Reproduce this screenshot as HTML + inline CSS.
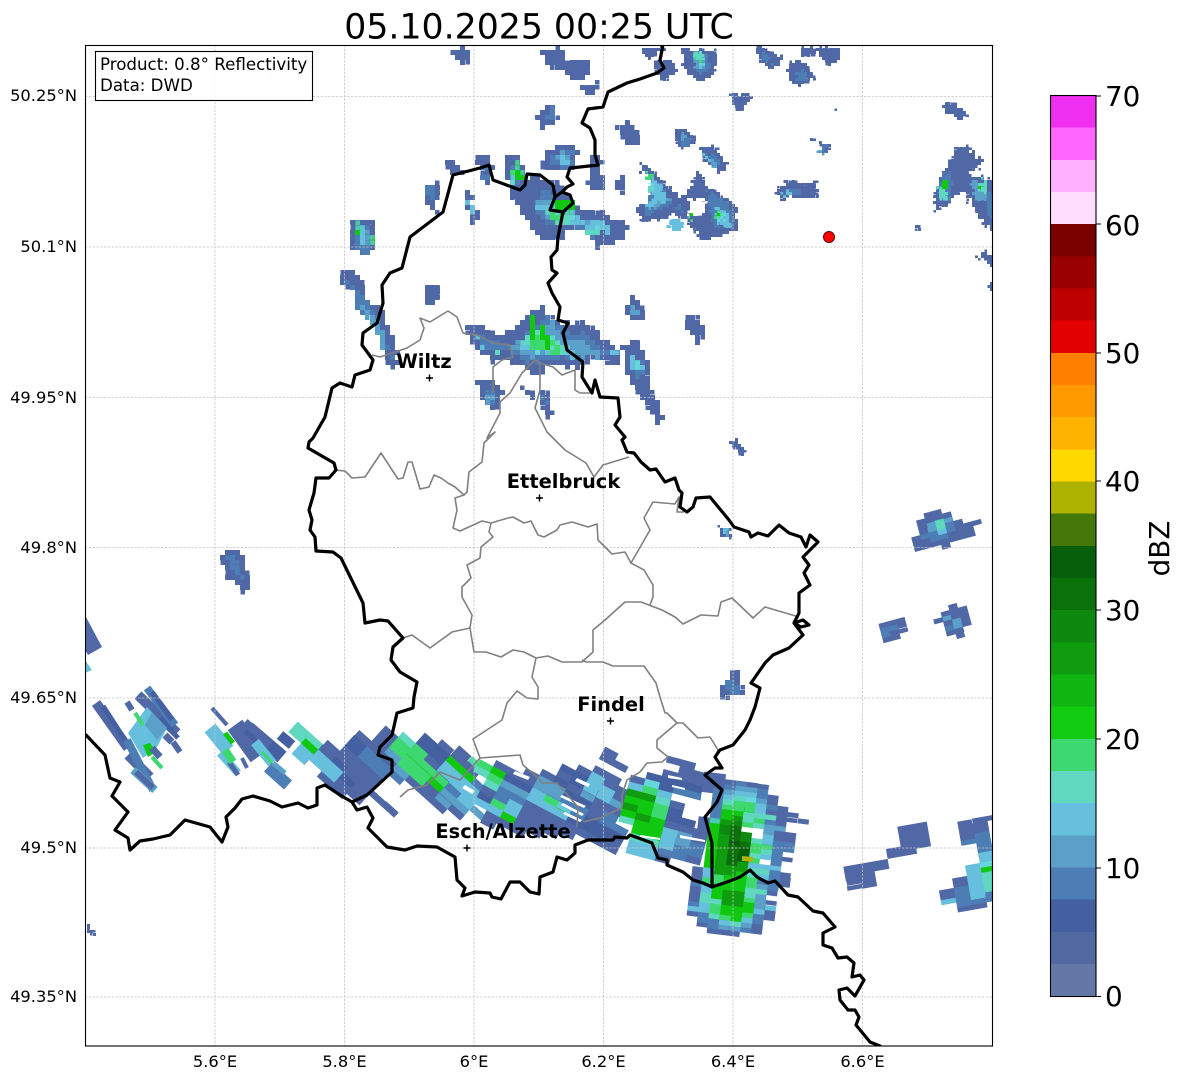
<!DOCTYPE html>
<html><head><meta charset="utf-8"><title>05.10.2025 00:25 UTC</title>
<style>html,body{margin:0;padding:0;background:#fff;width:1184px;height:1081px;overflow:hidden}svg{display:block;overflow:hidden}text{font-family:"DejaVu Sans","Liberation Sans",sans-serif;fill:#000}</style></head>
<body>
<svg xmlns="http://www.w3.org/2000/svg" width="1184" height="1081" viewBox="0 0 1184 1081">
<defs>
<clipPath id="m"><rect x="85" y="45" width="907.5" height="1001"/></clipPath>
<clipPath id="cA"><rect x="288" y="715" width="192" height="105"/></clipPath>
<clipPath id="cB"><rect x="480" y="740" width="145" height="110"/></clipPath>
<clipPath id="cC"><rect x="625" y="745" width="75" height="125"/></clipPath>
<clipPath id="cS"><path d="M700 765H815V945H680V868H700z"/></clipPath>
<clipPath id="cE"><rect x="835" y="810" width="157.500" height="105"/></clipPath>
<clipPath id="cR"><rect x="870" y="500" width="110" height="145"/></clipPath>
<filter id="p5" filterUnits="userSpaceOnUse" primitiveUnits="userSpaceOnUse" x="0" y="0" width="1184" height="1081" color-interpolation-filters="sRGB"><feTurbulence baseFrequency=".16" numOctaves="2" seed="7" result="n"/><feDisplacementMap in="SourceGraphic" in2="n" scale="9" xChannelSelector="R" yChannelSelector="G" result="d"/><feFlood x="2" y="2" width="1" height="1"/><feComposite width="5" height="5"/><feTile result="a"/><feComposite in="d" in2="a" operator="in"/><feMorphology operator="dilate" radius="2"/></filter>
<filter id="p3" filterUnits="userSpaceOnUse" primitiveUnits="userSpaceOnUse" x="0" y="0" width="1184" height="1081" color-interpolation-filters="sRGB"><feTurbulence baseFrequency=".2" numOctaves="2" seed="11" result="n"/><feDisplacementMap in="SourceGraphic" in2="n" scale="8" xChannelSelector="R" yChannelSelector="G" result="d"/><feFlood x="1" y="1" width="1" height="1"/><feComposite width="3" height="3"/><feTile result="a"/><feComposite in="d" in2="a" operator="in"/><feMorphology operator="dilate" radius="1"/></filter>
<filter id="fA" filterUnits="userSpaceOnUse" primitiveUnits="userSpaceOnUse" x="670" y="190" width="260" height="250" color-interpolation-filters="sRGB"><feTurbulence baseFrequency=".09" numOctaves="2" seed="5" result="n"/><feDisplacementMap in="SourceGraphic" in2="n" scale="8" xChannelSelector="R" yChannelSelector="G" result="d"/><feFlood x="678" y="193" width="1" height="1"/><feComposite x="670" y="190" width="17" height="7"/><feTile result="a"/><feComposite in="d" in2="a" operator="in"/><feMorphology operator="dilate" radius="8 3"/></filter>
<filter id="fB" filterUnits="userSpaceOnUse" primitiveUnits="userSpaceOnUse" x="750" y="340" width="220" height="200" color-interpolation-filters="sRGB"><feTurbulence baseFrequency=".1" numOctaves="2" seed="6" result="n"/><feDisplacementMap in="SourceGraphic" in2="n" scale="8" xChannelSelector="R" yChannelSelector="G" result="d"/><feFlood x="757" y="343" width="1" height="1"/><feComposite x="750" y="340" width="15" height="7"/><feTile result="a"/><feComposite in="d" in2="a" operator="in"/><feMorphology operator="dilate" radius="7 3"/></filter>
<filter id="fC" filterUnits="userSpaceOnUse" primitiveUnits="userSpaceOnUse" x="780" y="515" width="160" height="185" color-interpolation-filters="sRGB"><feTurbulence baseFrequency=".1" numOctaves="2" seed="8" result="n"/><feDisplacementMap in="SourceGraphic" in2="n" scale="6" xChannelSelector="R" yChannelSelector="G" result="d"/><feFlood x="787" y="518" width="1" height="1"/><feComposite x="780" y="515" width="15" height="7"/><feTile result="a"/><feComposite in="d" in2="a" operator="in"/><feMorphology operator="dilate" radius="7 3"/></filter>
<filter id="fS" filterUnits="userSpaceOnUse" primitiveUnits="userSpaceOnUse" x="760" y="645" width="175" height="220" color-interpolation-filters="sRGB"><feTurbulence baseFrequency=".1" numOctaves="2" seed="9" result="n"/><feDisplacementMap in="SourceGraphic" in2="n" scale="6" xChannelSelector="R" yChannelSelector="G" result="d"/><feFlood x="765" y="647" width="1" height="1"/><feComposite x="760" y="645" width="11" height="5"/><feTile result="a"/><feComposite in="d" in2="a" operator="in"/><feMorphology operator="dilate" radius="5 2"/></filter>
<filter id="fE" filterUnits="userSpaceOnUse" primitiveUnits="userSpaceOnUse" x="650" y="930" width="200" height="160" color-interpolation-filters="sRGB"><feTurbulence baseFrequency=".1" numOctaves="2" seed="3" result="n"/><feDisplacementMap in="SourceGraphic" in2="n" scale="7" xChannelSelector="R" yChannelSelector="G" result="d"/><feFlood x="657" y="932" width="1" height="1"/><feComposite x="650" y="930" width="15" height="5"/><feTile result="a"/><feComposite in="d" in2="a" operator="in"/><feMorphology operator="dilate" radius="7 2"/></filter>
<filter id="fR" filterUnits="userSpaceOnUse" primitiveUnits="userSpaceOnUse" x="660" y="700" width="170" height="185" color-interpolation-filters="sRGB"><feTurbulence baseFrequency=".15" numOctaves="2" seed="2" result="n"/><feDisplacementMap in="SourceGraphic" in2="n" scale="7" xChannelSelector="R" yChannelSelector="G" result="d"/><feFlood x="664" y="702" width="1" height="1"/><feComposite x="660" y="700" width="9" height="5"/><feTile result="a"/><feComposite in="d" in2="a" operator="in"/><feMorphology operator="dilate" radius="4 2"/></filter>
</defs>
<rect width="1184" height="1081" fill="#fff"/>
<g clip-path="url(#m)">
<g filter="url(#p5)" shape-rendering="crispEdges">
<path fill="#5069a6" d="M448 48 473 46 470 55 458 63 449 56zM540 46 560 48 563 65 553 70 542 60zM565 60 585 58 584 75 572 80 565 75zM580 85 595 78 594 90 585 92zM533 112 548 103 557 115 545 125 537 126zM615 125 627 122 638 132 633 148 620 135zM540 150 560 143 575 145 575 165 550 170 540 165zM587 150 598 155 602 185 590 190 585 178zM613 178 623 175 620 190 613 188zM442 158 452 155 460 172 450 172 445 165zM473 152 485 152 490 165 484 185 478 165zM503 155 520 155 523 185 510 190 503 175zM505 187 530 175 555 180 575 205 600 212 625 222 625 238 612 237 600 248 590 240 575 222 555 237 540 235 520 215zM422 182 434 182 436 195 433 210 423 200zM460 187 466 188 478 220 478 227 468 218zM349 215 372 220 373 240 367 255 358 255 349 245zM338 282 340 266 346 266 358 272 365 300 378 305 386 320 392 340 398 365 385 365 383 350 376 320 360 305 352 290zM420 282 434 282 435 295 428 303 420 290zM624 300 632 292 640 305 641 318 630 320 623 310zM463 323 478 322 495 335 520 325 525 310 540 305 555 318 570 325 582 318 595 330 615 350 620 365 608 362 590 355 575 365 555 362 550 360 535 375 525 365 500 358 490 360 475 345 465 335zM621 345 632 337 645 350 645 375 655 400 662 420 655 423 640 395 622 370zM475 380 490 378 500 390 498 405 490 408 476 395zM538 385 546 387 549 412 543 415 538 403zM522 387 528 385 530 398 524 396zM680 318 695 310 703 328 697 342 685 330zM729 668 737 668 742 695 716 693 717 685 728 682zM217 555 230 546 240 552 248 590 240 590 225 572z"/>
<path fill="#4c7db5" d="M352 220 366 224 368 248 358 250 352 240zM424 185 432 186 432 198 426 198zM480 158 488 165 484 178 480 170zM545 155 570 150 570 165 548 165zM508 165 518 165 520 182 510 185zM545 185 550 195 575 215 600 222 590 235 570 218 550 225 530 205zM470 328 490 340 510 345 520 335 545 315 565 330 590 335 610 355 590 350 560 355 530 360 500 350 480 345zM628 348 640 360 640 380 630 370zM482 385 494 392 492 402 482 394zM541 392 545 405 541 405zM345 280 355 290 372 310 380 330 388 350 392 360 382 345 372 320 355 305zM552 115 548 106 540 118zM725 680 733 675 737 690 722 690zM225 555 232 552 240 580 232 572z"/>
<path fill="#5aa0c8" d="M358 222 364 226 365 245 358 245zM555 195 575 215 610 225 590 225 570 215 548 220 535 200zM505 345 525 335 550 320 560 335 585 340 600 355 560 352 530 355zM628 310 634 298 636 312zM352 290 360 300 378 325 385 350 380 345 365 315zM558 152 570 155 568 165 555 162zM485 390 490 395 488 402z"/>
<path fill="#66c0dd" d="M530 200 560 210 595 225 600 232 585 225 560 220zM515 347 535 335 570 345 575 355 545 352zM358 226 362 230 362 240 358 240zM630 350 640 365 636 372 628 360zM510 170 518 172 517 182 510 180zM475 335 482 345 478 350zM590 215 610 225 612 232 595 230zM465 195 472 208 468 212zM558 155 567 155 565 162 558 160zM605 342 615 352 610 355z"/>
<path fill="#60d8c0" d="M540 205 570 215 575 222 555 222zM520 342 540 325 560 345 565 350 535 350zM492 345 500 350 495 355zM582 225 602 228 598 235 585 232zM635 355 640 362 635 365z"/>
<path fill="#3dd86f" d="M530 335 545 330 560 350 530 350zM510 168 518 168 518 180 512 178zM548 208 560 212 555 222 548 218zM355 225 358 232 355 235zM642 355 645 362 642 362z"/>
<path fill="#11c811" d="M527 310 532 312 534 340 530 338zM537 325 545 325 550 345 540 345zM513 160 518 162 522 178 516 178zM552 195 572 198 575 210 552 210zM355 222 360 222 360 232 355 232zM369 233 373 233 373 243 369 243z"/>
</g>
<g filter="url(#p3)" shape-rendering="crispEdges">
<path fill="#5069a6" d="M640 46 665 46 650 56 642 55zM650 60 670 58 677 72 660 78zM680 47 715 47 713 72 700 80 682 68zM753 46 765 46 782 58 768 68 760 60zM787 62 800 57 812 75 800 85 787 78zM797 46 838 46 838 58 825 62 815 52 800 55zM728 92 745 92 750 97 742 107 733 107zM832 107 836 107 836 110 832 110zM942 102 955 102 967 113 958 118 943 110zM673 128 685 127 694 137 686 148 675 142zM698 145 712 145 725 162 718 172 702 158zM808 136 812 136 812 140 808 140zM817 140 832 142 826 150 822 151zM775 190 785 178 800 182 815 180 815 195 790 195 780 198zM640 160 652 170 660 180 680 195 690 185 697 168 705 185 720 192 735 205 736 228 722 232 700 240 690 225 680 215 670 212 655 218 640 220 635 205 650 200 655 185 640 175zM955 145 965 145 982 160 977 165 965 170 972 175 995 180 995 232 985 225 975 215 965 190 955 190 950 200 940 205 932 210 936 180 945 165zM978 250 985 250 995 262 995 270 985 262zM988 282 995 282 995 288 988 288zM914 225 917 225 917 228 914 228zM972 255 976 255 976 258 972 258zM728 440 735 438 743 450 740 456zM717 524 728 525 730 535 720 535zM85 922 95 932 90 935 85 928z"/>
<path fill="#fff" d="M687 197 703 197 703 212 687 212zM640 172 650 172 650 192 640 192z"/>
<path fill="#4c7db5" d="M690 55 705 52 708 68 695 72zM760 48 770 62 762 58zM795 68 803 68 805 80 795 78zM680 135 688 135 684 145 678 140zM704 152 712 152 720 165 712 165zM650 175 660 185 670 200 650 210 642 212zM675 200 682 205 678 212zM705 190 725 200 732 220 712 225zM785 188 798 186 800 192 785 193zM940 175 950 170 948 195 940 198zM985 190 995 190 995 220 985 215zM820 145 826 143 822 150z"/>
<path fill="#5aa0c8" d="M655 180 668 198 648 208 642 205 655 195zM692 58 704 58 704 66 695 68zM678 133 684 133 682 140zM708 156 716 160 716 168 708 162zM815 150 822 148 820 152zM720 526 728 528 726 534 722 532zM970 178 985 185 983 200 972 195z"/>
<path fill="#66c0dd" d="M650 178 660 185 665 198 648 205 642 208 650 198zM714 205 726 210 730 225 716 222zM778 192 790 190 787 195zM936 190 944 188 942 198zM695 60 702 60 700 68zM698 150 708 155 712 163 706 158zM672 215 682 220 678 232 668 225zM720 526 726 528 724 532z"/>
<path fill="#60d8c0" d="M690 50 700 50 705 60 698 62zM714 208 722 212 722 220 714 216zM646 180 652 186 648 192zM936 186 946 186 944 196 938 196zM975 180 986 180 984 190 976 188z"/>
<path fill="#3dd86f" d="M645 168 650 172 650 178 645 175zM692 55 700 58 698 62zM714 210 722 214 722 218 716 216z"/>
<path fill="#11c811" d="M940 180 945 180 945 192 941 190zM975 184 982 182 980 188zM716 210 720 212 720 216 716 214zM686 212 690 212 690 218 686 218z"/>
</g>
<path fill="#e9f0f7" d="M266 74 274 70 272 85 266 92 263 90z"/>
<path fill="#5069a6" d="M86 617 102 647 88 655 85 650z"/>
<path fill="#66c0dd" d="M85 660 92 670 85 673z"/>
<g fill="none" stroke-linecap="butt">
<path stroke="#5069a6" stroke-width="10" d="M96 703 128 748M138 695 177 733M128 755 150 777"/>
<path stroke="#4c7db5" stroke-width="8" d="M127 740 153 790M147 688 175 725"/>
<path stroke="#5069a6" stroke-width="6" d="M127 702 132 710M173 742 180 752"/>
<path stroke="#4560a0" stroke-width="5" d="M103 706 125 740M152 692 172 720M160 718 178 738"/>
<path stroke="#5aa0c8" stroke-width="8" d="M133 770 155 790"/>
<path stroke="#5069a6" stroke-width="6" d="M136 772 153 788"/>
</g>
<path fill="#66c0dd" d="M128 733 147 707 167 728 157 747 143 758z"/>
<path fill="#5aa0c8" d="M152 712 167 728 157 740 145 725z"/>
<path fill="#11c811" d="M143 745 150 743 156 752 148 757z"/>
<g fill="none" stroke-linecap="butt">
<path stroke="#3dd86f" stroke-width="4" d="M135 713 143 725M152 757 162 768"/>
<path stroke="#5069a6" stroke-width="7" d="M165 735 172 742M152 748 160 757"/>
<path stroke="#5069a6" stroke-width="4" d="M212 708 227 725M242 758 247 768"/>
<path stroke="#66c0dd" stroke-width="14" d="M210 728 228 750"/>
<path stroke="#66c0dd" stroke-width="8" d="M220 753 238 773"/>
<path stroke="#5069a6" stroke-width="5" d="M229 762 238 775"/>
<path stroke="#3dd86f" stroke-width="8" d="M225 750 233 762"/>
<path stroke="#11c811" stroke-width="5" d="M225 733 233 743"/>
<path stroke="#5069a6" stroke-width="18" d="M235 725 258 757"/>
<path stroke="#4560a0" stroke-width="14" d="M248 728 282 757"/>
<path stroke="#5069a6" stroke-width="8" d="M245 722 270 745"/>
<path stroke="#66c0dd" stroke-width="10" d="M255 742 272 763"/>
<path stroke="#3dd86f" stroke-width="3" d="M262 752 272 763"/>
<path stroke="#4c7db5" stroke-width="12" d="M268 767 288 785"/>
<path stroke="#5aa0c8" stroke-width="5" d="M273 763 285 773"/>
<path stroke="#4560a0" stroke-width="10" d="M280 735 292 745"/>
</g>
<g transform="rotate(42)"><g filter="url(#fA)"><g transform="rotate(-42)" clip-path="url(#cA)" shape-rendering="crispEdges">
<path fill="#5069a6" d="M292 722 320 745 345 745 375 730 395 730 420 735 470 755 485 760 485 818 470 815 440 810 410 785 395 770 372 800 355 802 325 780 300 755zM377 800 385 797 402 812 396 818z"/>
<g fill="none" stroke-linecap="butt">
<path stroke="#4560a0" stroke-width="12" d="M352 740 385 770M330 760 360 790M420 740 460 770M440 770 485 800M300 745 340 780"/>
<path stroke="#4c7db5" stroke-width="13" d="M360 750 395 775M415 760 455 795M470 770 485 779"/>
<path stroke="#5aa0c8" stroke-width="10" d="M385 745 410 770M440 790 480 810"/>
<path stroke="#66c0dd" stroke-width="14" d="M293 740 335 768M395 740 430 770M450 765 470 790M455 790 485 803"/>
<path stroke="#60d8c0" stroke-width="8" d="M295 727 322 750M400 735 430 760M475 770 485 778"/>
</g>
<path fill="#3dd86f" d="M395 745 410 738 442 770 440 785 425 785 400 762zM450 757 468 765 470 772 455 770zM475 760 485 757 485 778z"/>
<path fill="#11c811" d="M303 745 312 743 320 755 310 762z"/>
<path fill="none" stroke="#11c811" stroke-width="4" d="M405 750 440 785M455 760 470 772"/>
</g></g></g>
<g transform="rotate(28)"><g filter="url(#fB)"><g transform="rotate(-28)" clip-path="url(#cB)" shape-rendering="crispEdges">
<path fill="#5069a6" d="M475 757 520 770 560 765 600 768 630 775 630 850 610 848 575 835 520 835 475 817zM600 750 610 745 627 765 620 770 603 760zM615 743 623 747 621 751 614 748z"/>
<g fill="none" stroke-linecap="butt">
<path stroke="#4560a0" stroke-width="12" d="M475 793 500 810M500 775 560 800M550 780 590 800M570 815 620 835M560 765 600 785"/>
<path stroke="#4c7db5" stroke-width="13" d="M470 770 520 800M545 795 590 815M600 810 625 825"/>
<path stroke="#5aa0c8" stroke-width="10" d="M475 802 480 810M500 780 530 800M530 775 560 790M590 790 620 805"/>
<path stroke="#66c0dd" stroke-width="14" d="M475 800 490 805M490 798 520 815M525 790 565 810M590 780 610 795"/>
<path stroke="#60d8c0" stroke-width="8" d="M475 770 500 790M540 790 560 805"/>
</g>
<path fill="#3dd86f" d="M475 760 490 756 510 775 505 782 485 775zM490 803 500 798 518 815 510 822zM535 790 548 790 562 805 552 810z"/>
<path fill="none" stroke="#11c811" stroke-width="4" d="M485 765 505 775M500 808 515 818M550 800 565 808"/>
</g></g></g>
<g transform="rotate(15)"><g filter="url(#fC)"><g transform="rotate(-15)" clip-path="url(#cC)" shape-rendering="crispEdges">
<path fill="#5069a6" d="M620 775 660 772 705 770 705 866 690 862 640 858 620 850zM672 755 707 767 700 770 672 762zM675 768 705 771 705 790 678 782z"/>
<g fill="none" stroke-linecap="butt">
<path stroke="#4560a0" stroke-width="12" d="M650 780 700 790M660 810 700 820"/>
<path stroke="#4c7db5" stroke-width="13" d="M665 790 700 800M640 835 680 850M680 840 710 855"/>
<path stroke="#5aa0c8" stroke-width="10" d="M630 820 690 840"/>
<path stroke="#66c0dd" stroke-width="14" d="M640 780 660 845M620 840 650 850M690 815 705 815"/>
</g>
<path fill="#fff" d="M678 792 710 795 712 815 680 817z"/>
<path fill="#66c0dd" d="M640 782 655 778 668 790 670 820 668 845 655 856 628 848 622 820 622 795z"/>
<path fill="#60d8c0" d="M626 795 650 782 664 800 665 835 655 848 632 838 622 815z"/>
<path fill="#3dd86f" d="M626 797 648 785 660 805 660 830 652 842 632 832 625 815z"/>
<path fill="#11c811" d="M622 802 635 790 648 787 655 812 662 840 650 843 632 825 625 817z"/>
<path fill="#0f9d0f" d="M626 790 650 790 652 798 628 797zM627 805 642 808 645 820 630 818z"/>
</g></g></g>
<g transform="rotate(7)"><g filter="url(#fS)"><g transform="rotate(-7)" clip-path="url(#cS)" shape-rendering="crispEdges">
<path fill="#5069a6" d="M698 770 720 770 720 868 698 866zM715 790 730 780 750 780 770 790 780 805 790 818 785 850 780 860 785 878 775 885 768 905 760 925 745 933 720 935 700 925 688 910 695 880 695 860 705 840 712 810zM698 770 717 772 720 795 698 788zM790 818H803V821H790zM782 832H792V845H782zM781 853H785V857H781zM775 857H787V862H775zM770 880H785V885H770zM758 898H775V902H758zM750 905H772V918H750zM745 925H760V932H745zM690 878H700V884H690zM683 905H695V910H683z"/>
<path fill="#4c7db5" d="M712 790 740 782 760 788 776 808 780 845 776 880 768 895 760 920 745 930 712 930 700 920 692 905 698 870 705 840z"/>
<path fill="#5aa0c8" d="M722 792 750 785 765 800 772 840 770 870 760 895 755 920 735 928 712 925 697 905 700 870 705 845z"/>
<path fill="#66c0dd" d="M722 796 748 788 762 805 767 838 767 870 757 895 752 918 735 926 712 922 700 905 703 870 706 850z"/>
<path fill="#60d8c0" d="M722 800 748 792 758 808 763 840 762 868 752 892 748 915 735 922 714 918 704 902 707 870 710 850z"/>
<path fill="#3dd86f" d="M720 804 750 800 756 850 752 885 752 905 742 921 714 918 706 895 708 870 702 855 708 835z"/>
<path fill="#11c811" d="M716 810 748 807 752 860 746 888 750 904 742 920 719 915 710 895 712 870 701 855 710 830z"/>
<path fill="#0f9d0f" d="M718 818 745 815 750 852 742 872 716 878 712 850zM715 888 745 886 748 902 722 906z"/>
<path fill="#0f880f" d="M722 822 745 820 747 856 725 866z"/>
<path fill="#0b720b" d="M730 826 742 826 746 860 730 866 722 850 726 838z"/>
<path fill="#065f0a" d="M733 838 742 838 746 858 730 862z"/>
<path fill="#3dd86f" d="M745 842H768V848H745zM745 818H765V824H745zM700 876H725V880H700z"/>
<path fill="#60d8c0" d="M745 812H770V818H745zM750 850H772V855H750zM748 868H770V874H748zM700 896H718V902H700zM745 890H765V896H745z"/>
<path fill="#66c0dd" d="M700 870H716V876H700zM690 905H712V911H690zM748 905H772V912H748zM745 862H775V867H745z"/>
<path fill="#5aa0c8" d="M762 822H790V828H762z"/>
<path fill="#4c7db5" d="M770 842H790V850H770zM755 878H780V885H755zM693 915H712V921H693z"/>
<path fill="#5069a6" d="M770 810H795V817H770zM775 830H800V838H775z"/>
<path fill="#11c811" d="M712 880H745V886H712zM718 905H742V915H718z"/>
<path fill="#0f9d0f" d="M720 892H745V898H720z"/>
<path fill="#fff" d="M700 793H710V815H700zM745 827 768 828 768 835 745 835zM762 858H772V860H762z"/>
</g></g></g>
<g transform="rotate(-10)"><g filter="url(#fE)"><g transform="rotate(10)" clip-path="url(#cE)" shape-rendering="crispEdges">
<path fill="#5069a6" d="M840 865 875 862 880 855 893 850 900 822 920 822 923 845 915 855 893 858 873 875 870 885 852 885 850 875 840 873z"/>
<path fill="#5069a6" d="M955 822 992 815 995 908 970 910 935 905 932 893 958 880 972 862 968 845 957 835z"/>
<path fill="#4c7db5" d="M965 838 985 830 995 835 995 900 970 905 945 900 962 885 976 858z"/>
<path fill="#66c0dd" d="M975 855 990 848 995 885 970 897 960 890zM945 895 955 892 955 905 945 905z"/>
<path fill="#60d8c0" d="M985 860 995 855 995 890 980 893z"/>
<path fill="#11c811" d="M985 862 990 858 995 860 995 875 988 872z"/>
</g></g></g>
<g transform="rotate(-15)"><g filter="url(#fR)"><g transform="rotate(15)" clip-path="url(#cR)" shape-rendering="crispEdges">
<path fill="#5069a6" d="M915 525 925 510 945 510 950 520 975 520 970 535 945 545 915 550 910 540zM877 622 903 618 903 630 890 640 880 638zM945 605 960 603 970 620 960 635 945 635 935 622z"/>
<path fill="#4c7db5" d="M920 530 940 520 960 528 930 542zM950 615 962 615 958 628 945 626zM880 628 895 625 892 635 882 635z"/>
<path fill="#5aa0c8" d="M930 522 945 518 945 530 930 530zM945 618 958 616 955 625z"/>
<path fill="#66c0dd" d="M933 526 942 522 942 530 935 532zM950 620 958 620 954 626z"/>
<path fill="#60d8c0" d="M934 520 940 520 938 528z"/>
</g></g></g>
<path fill="#adb300" d="M742 856 753 857 753 862 742 861z"/>
<path fill="#fff" d="M562 795 586 806 584 808 560 797zM563 803 584 814 582 816 561 805zM565 812 582 820 580 822 563 814zM515 771 530 777 528 780 513 774zM465 785 475 791 472 794 462 788zM577 778 590 784 588 787 575 781zM668 775 682 778 682 780 668 778zM672 785 685 788 685 790 672 787zM640 835 660 838 660 840 640 837zM680 835 705 840 705 842 680 838z"/>
<g stroke="#c4c4c4" stroke-width=".8" stroke-dasharray="2.4 1.4" fill="none">
<path d="M215 45V1046M344.500 45V1046M474 45V1046M603.500 45V1046M733 45V1046M862.500 45V1046M85 96.500H992M85 247H992M85 397.500H992M85 547.500H992M85 698H992M85 848H992M85 997H992"/>
</g>
<path fill="none" stroke="#808080" stroke-width="1.6" stroke-linejoin="round" d="M372 355 380 357 407 348 420 340 424 328 420 318 430 322 448 311 457 317 463 333 477 335 493 343 510 345 513 357 502 360 493 367 493 393M334 470 345 471 352 478 365 477 381 453 398 479 403 478 408 462 412 462 420 489 429 487 434 475 441 478 448 483 455 487 464 495 467 492 469 472 482 462 484 443 495 432 487 438 500 413 500 402 510 393 522 373 535 360 540 363 540 390 535 408 547 432 565 450 586 463 594 477 603 465 629 457M540 363 553 367 562 375 575 370 575 390 580 393 590 393M464 495 455 498 457 510 453 528 460 531 482 521 491 523 508 518 513 517 524 523 531 521 538 535 544 537 557 530 560 525 572 522 588 527 597 524 598 540 612 554 625 552 631 563 644 570 653 585 653 597 650 605M631 563 650 530 644 518 653 502 675 504 679 497 677 512 684 512M491 523 489 532 493 537 481 547 480 558 467 565 471 578 462 587 462 597 472 615 470 628 474 652 486 652 501 657 513 650 524 652 536 658 548 656 562 662 582 662 593 652 593 630 605 620 625 602 641 602 662 610 675 617 683 624 701 615 718 616 721 602 732 598 753 618 765 607 799 617M582 660 586 662 603 662 613 666 644 666 656 683 660 697 665 713 667 713 677 723 657 740 657 748 668 757 662 762 647 763 640 772 627 780 622 795 622 808 600 818 583 822M677 723 683 723 698 738 710 737 718 750 715 757M536 658 532 677 538 687 538 699 527 698 517 691 507 703 502 720 473 739 480 758 460 780 440 772 427 785 408 790 400 797M480 758 520 755 523 765 537 777 542 783 557 783 578 807 577 827M403 638 412 635 430 648 452 632 470 628"/>
<path fill="none" stroke="#000" stroke-width="3.2" stroke-linejoin="round" stroke-linecap="round" d="M86 735 105 755 110 778 120 782 112 796 128 812 115 830 128 838 130 850 140 841 153 839 170 835 185 820 210 827 222 842 228 827 226 817 235 808 242 799 253 796 270 801 282 807 298 803 308 808 317 805 317 788 325 785 340 795 352 802 357 810 367 807 373 818 368 828 387 847 405 850 417 846 437 847 455 857 457 880 465 888 462 896 475 892 490 893 492 897 501 899 510 882 520 882 530 892 539 894 540 877 553 872 557 857 567 860 575 853 575 845 588 840 613 840 615 837 627 838 630 835 652 843 658 858 667 860 667 865 683 872 693 880 703 883 712 887 727 882 740 877 750 870 757 877 768 883 775 881 788 895 798 897 813 911 823 913 835 927 823 933 823 945 832 948 838 958 847 957 854 963 852 977 860 975 864 980 855 996 847 988 839 990 840 1000 848 1010 855 1010 859 1017 856 1025 870 1042 880 1046M352 802 367 795 392 772 392 760 378 755 380 747 392 735 397 713 413 708 414 697 417 682 400 672 391 660 393 647 403 638 388 621 380 620 365 623 363 603 341 558 333 552 316 551 315 537 310 530 312 520 309 510 314 493 316 478 329 478 336 470 334 463 308 448 309 442 313 438 325 417 332 388 340 383 352 387 355 375 370 370 373 360 362 345 363 333 377 323 383 303 382 285 390 273 402 268 410 237 443 212 453 175 480 168 489 165 493 180 520 190 525 185 527 174 540 175 553 185 555 197 550 210 563 212 573 203 570 195 562 192 555 197M663 45 660 60 664 68 657 73 640 79 627 83 608 92 603 107 588 109 582 123 590 128 595 140 595 155 598 165 580 167 570 168 567 177 573 184 567 187 562 192M563 212 558 237 557 250 551 257 552 270 557 273 548 283 552 293 560 307 558 320 568 323 563 333 567 350 583 362 582 377 592 393 595 380 600 397 618 398 620 417 615 425 625 437 622 440 627 452 634 453 641 462 650 470 656 469 665 482 675 478 679 490 682 493 680 507 687 512 693 507 696 498 710 497 729 520 734 527 749 532 751 537 758 533 768 536 779 525 789 533 801 537 806 547 810 535 818 542 803 557 809 565 804 573 810 585 799 593 799 613 794 623 803 620 809 625 801 627 794 623 803 635 789 648 773 655 765 663 751 683 760 688 755 707 750 720 745 730 733 745 720 750 715 757 722 768 715 768 705 775 722 790 717 802 705 817 712 843 712 887"/>
</g>
<rect x="85.500" y="45.500" width="907" height="1000.500" fill="none" stroke="#000" stroke-width="1.1"/>
<g stroke="#000" stroke-width="1.4" fill="none">
<path d="M426 378H433M429.500 374.500V381.500M536 498H543M539.500 494.500V501.500M607 721H614M610.500 717.500V724.500M463.500 848H470.500M467 844.500V851.500"/>
</g>
<g fill="#000"><circle cx="429.500" cy="378" r="1.300"/><circle cx="539.500" cy="498" r="1.300"/><circle cx="610.500" cy="721" r="1.300"/><circle cx="467" cy="848" r="1.300"/></g>
<circle cx="829" cy="237" r="5.500" fill="#f00" stroke="#5a0000" stroke-width="1"/>
<rect x="95.500" y="51.500" width="217" height="49" fill="#fff" fill-opacity=".88" stroke="#000" stroke-width="1.1"/>
<text x="100" y="70" font-size="16.67">Product: 0.8° Reflectivity</text>
<text x="100" y="91" font-size="16.67">Data: DWD</text>
<g font-weight="700" font-size="19.44" text-anchor="middle">
<text x="424" y="368">Wiltz</text>
<text x="563.500" y="488">Ettelbruck</text>
<text x="611" y="711">Findel</text>
<text x="503" y="838">Esch/Alzette</text>
</g>
<text x="539" y="38.500" font-size="34.700" text-anchor="middle">05.10.2025 00:25 UTC</text>
<g font-size="16.300" text-anchor="end">
<text x="77" y="101">50.25°N</text><text x="77" y="252">50.1°N</text><text x="77" y="403">49.95°N</text><text x="77" y="553">49.8°N</text><text x="77" y="703">49.65°N</text><text x="77" y="853">49.5°N</text><text x="77" y="1002">49.35°N</text>
</g>
<g font-size="16.300" text-anchor="middle">
<text x="215" y="1067">5.6°E</text><text x="344.500" y="1067">5.8°E</text><text x="474" y="1067">6°E</text><text x="603.500" y="1067">6.2°E</text><text x="733" y="1067">6.4°E</text><text x="862.500" y="1067">6.6°E</text>
</g>
<g shape-rendering="crispEdges">
<rect x="1051" y="95.500" width="45" height="32.600" fill="#ee2ff0"/><rect x="1051" y="127.700" width="45" height="32.600" fill="#ff66ff"/><rect x="1051" y="159.900" width="45" height="32.600" fill="#ffb0ff"/><rect x="1051" y="192" width="45" height="32.600" fill="#ffddff"/>
<rect x="1051" y="224.200" width="45" height="32.600" fill="#7a0000"/><rect x="1051" y="256.400" width="45" height="32.600" fill="#9b0000"/><rect x="1051" y="288.500" width="45" height="32.600" fill="#bd0000"/><rect x="1051" y="320.700" width="45" height="32.600" fill="#e30000"/>
<rect x="1051" y="352.900" width="45" height="32.600" fill="#ff7f00"/><rect x="1051" y="385" width="45" height="32.600" fill="#ff9900"/><rect x="1051" y="417.200" width="45" height="32.600" fill="#ffb200"/><rect x="1051" y="449.400" width="45" height="32.600" fill="#ffd800"/>
<rect x="1051" y="481.500" width="45" height="32.600" fill="#adb300"/><rect x="1051" y="513.700" width="45" height="32.600" fill="#45780a"/><rect x="1051" y="545.900" width="45" height="32.600" fill="#065f0a"/><rect x="1051" y="578" width="45" height="32.600" fill="#0b720b"/>
<rect x="1051" y="610.200" width="45" height="32.600" fill="#0f880f"/><rect x="1051" y="642.400" width="45" height="32.600" fill="#0f9d0f"/><rect x="1051" y="674.500" width="45" height="32.600" fill="#11b511"/><rect x="1051" y="706.700" width="45" height="32.600" fill="#11cc11"/>
<rect x="1051" y="738.900" width="45" height="32.600" fill="#3dd86f"/><rect x="1051" y="771" width="45" height="32.600" fill="#60d8c0"/><rect x="1051" y="803.200" width="45" height="32.600" fill="#66c0dd"/><rect x="1051" y="835.400" width="45" height="32.600" fill="#5aa0c8"/>
<rect x="1051" y="867.500" width="45" height="32.600" fill="#4c7db5"/><rect x="1051" y="899.700" width="45" height="32.600" fill="#4560a0"/><rect x="1051" y="931.900" width="45" height="32.600" fill="#5069a0"/><rect x="1051" y="964" width="45" height="32.500" fill="#6478a8"/>
</g>
<rect x="1050.500" y="95.500" width="45.500" height="901" fill="none" stroke="#000" stroke-width="1.1"/>
<path stroke="#000" stroke-width="1.1" d="M1096 96H1101M1096 224H1101M1096 353H1101M1096 481H1101M1096 610H1101M1096 739H1101M1096 868H1101M1096 996.500H1101"/>
<g font-size="27.800">
<text x="1105" y="106">70</text><text x="1105" y="235">60</text><text x="1105" y="363">50</text><text x="1105" y="491">40</text><text x="1105" y="620">30</text><text x="1105" y="749">20</text><text x="1105" y="878">10</text><text x="1105" y="1006">0</text>
</g>
<text transform="translate(1169 548.500) rotate(-90)" font-size="27.800" text-anchor="middle">dBZ</text>
</svg>
</body></html>
